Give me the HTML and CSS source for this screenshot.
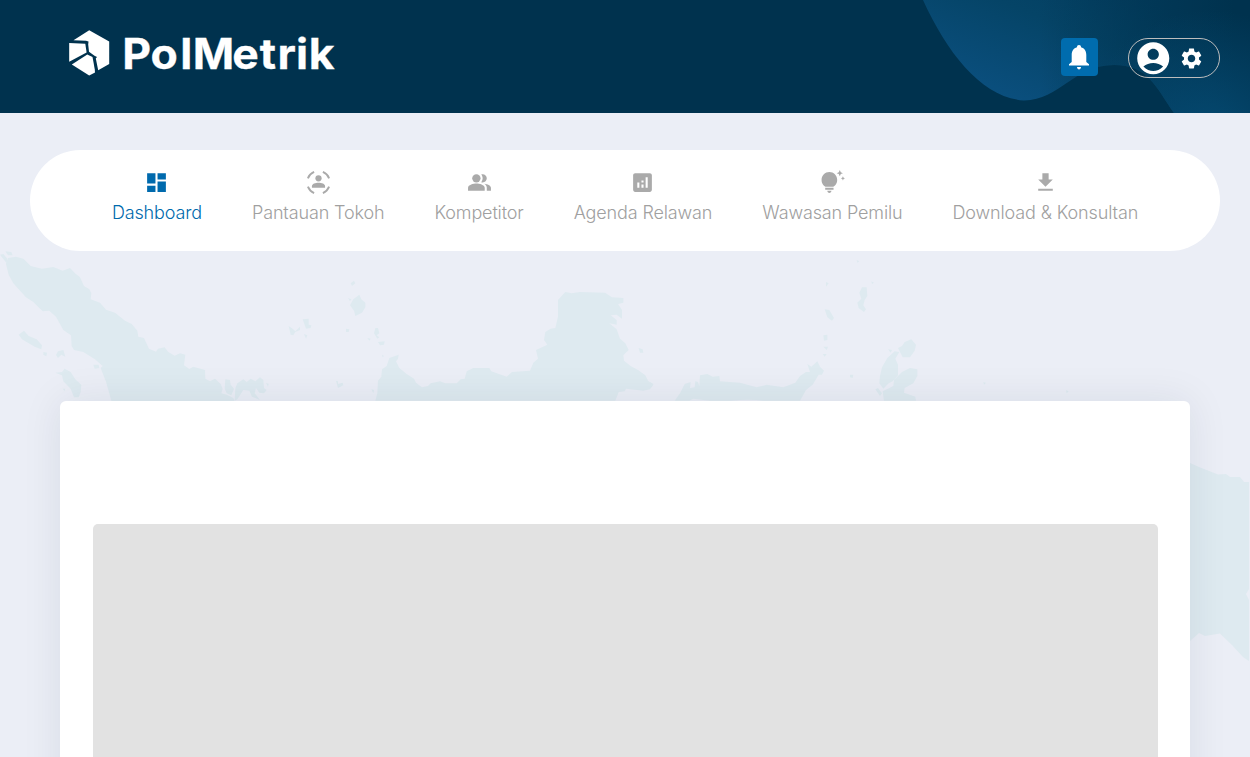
FILE: index.html
```
<!DOCTYPE html>
<html lang="id">
<head>
<meta charset="utf-8">
<title>PolMetrik</title>
<link rel="stylesheet" href="styles.css">
</head>
<body>
<div class="page">
  <svg class="map" width="1250" height="757" viewBox="0 0 1250 757" aria-hidden="true">
    <g transform="translate(0 240) scale(.33333)">
      <path d="M18 72L24 54 48 50 70 56 92 78 126 86 160 81 188 92 210 84 225 100 240 112 252 138 268 148 274 160 272 178 300 188 318 209 345 218 375 242 395 252 412 272 415 290 432 294 447 326 468 335 474 326 494 322 504 335 524 347 540 340 556 344 552 376 568 387 580 380 615 390 616 416 630 424 645 416 662 432 668 446 664 460 680 464 700 474 704 485H335L318 425 302 384 308 378 285 358 250 336 222 330 215 318 213 286 190 270 168 230 148 212 128 214 100 186 78 172 40 130 26 104Z"/>
      <path d="M16 34L34 36 38 46 24 46ZM0 44L10 42 22 56 20 70ZM56 284L72 272 86 288 110 298 126 316 124 328 104 320 66 298ZM130 336L141 338 139 349 130 344ZM168 345L174 334 190 330 196 350 184 344 174 354ZM166 398L186 396 194 386 212 396 226 418 244 434 242 456 236 472 222 472 212 446 190 424 186 406ZM188 446L196 446 194 454ZM280 374L296 374 298 384 284 386ZM676 418L690 420 692 434 702 446 694 466 680 460 674 446ZM706 445L712 430 730 418 740 426 752 416 766 424 780 412 790 420 792 444 800 450 792 460 778 458 768 444 764 460 780 480 756 470 748 452 730 450 712 478 704 482ZM798 428L806 432 804 440Z"/>
    </g>
    <g transform="translate(270 270) scale(.33333)">
      <path d="M316 392L322 370 324 332 334 320 336 298 350 288 358 264 386 254 384 266 378 274 388 294 410 312 432 326 438 338 456 352 474 348 482 340 510 334 526 340 560 340 572 328 584 326 590 304 610 294 658 294 664 304 710 320 726 306 780 302 790 278 804 266 798 240 832 224 822 210 826 186 842 176 856 174 864 140 864 90 886 66 905 70 930 66 1005 68 1026 82 1060 84 1060 98 1044 102 1056 120 1056 146 1040 134 1022 136 1040 150 1040 164 1018 160 1040 178 1050 206 1066 220 1076 240 1060 256 1062 272 1082 288 1104 300 1126 316 1134 332 1150 344 1140 358 1120 362 1068 356 1064 364 1046 366 1036 392Z"/>
      <path d="M242 40L252 32 256 40 246 48ZM234 84L244 88 240 94ZM240 106L250 88 268 74 274 88 286 98 286 112 276 128 256 138 252 122ZM56 168L68 176 76 184 90 170 90 180 76 186 70 196 62 194ZM98 148L116 146 116 164 124 166 122 174 108 176ZM102 192L112 196 108 206ZM228 176L238 178 236 186 228 186ZM316 174L324 174 328 190 320 196 328 202 322 206 312 190ZM292 204L302 206 298 212ZM324 216L344 214 342 224 330 226ZM336 254L342 258 338 262ZM198 332L204 334 204 342 218 338 220 346 204 354ZM304 358L312 360 310 370ZM1106 234L1118 238 1120 248 1110 248Z"/>
    </g>
    <g transform="translate(650 250) scale(.33333)">
      <path d="M74 452L90 430 104 402 122 396 120 414 134 412 136 394 144 396 148 408 150 376 172 372 188 380 208 378 210 394 270 398 320 412 350 404 400 412 436 398 450 378 468 366 480 366 472 342 484 350 502 334 510 350 522 362 516 374 506 374 488 404 468 420 450 452H340Q300 446 242 452L180 452 130 446 118 452Z"/>
      <path d="M690 378L696 352 712 324 734 304 748 306 736 326 744 344 744 376 728 394 716 400 700 416 688 400ZM744 294L756 288 764 276 784 268 798 284 794 302 780 322 758 322ZM714 298L726 300 722 308ZM732 390L756 366 780 354 802 358 802 378 790 400 764 414 762 428 796 440 798 452H702L698 424 730 408ZM676 418L684 414 696 430 690 438ZM636 112L650 112 652 138 644 150 640 166 648 178 642 186 626 174 622 158 634 146 628 128ZM664 94L672 98 666 102ZM620 30L628 34 622 38ZM528 96L536 100 528 110ZM524 178L538 180 552 204 546 212 532 202ZM520 256L532 254 532 270 522 272ZM520 290L534 290 530 300ZM518 312L530 312 524 320ZM600 374L610 374 608 384 600 382ZM1000 396L1008 398 1002 404ZM1248 420L1256 424 1250 430ZM0 396L10 402 2 414Z"/>
    </g>
    <path d="M1180 461L1190 463 1199 467 1218 474.500 1226 474 1230 477 1240 477 1244 482H1249V589L1246 594 1249 600V661L1243 657 1232 645 1220 633.500 1205 636 1199 633 1190 641 1180 642Z"/>
  </svg>

  <header class="topbar">
    <svg class="wave" width="340" height="113" viewBox="0 0 340 113" aria-hidden="true">
      <defs>
        <linearGradient id="waveA" gradientUnits="userSpaceOnUse" x1="100" y1="110" x2="155" y2="-30">
          <stop offset="0" stop-color="#0b5080"/><stop offset=".65" stop-color="#054467"/><stop offset="1" stop-color="#033f62"/>
        </linearGradient>
        <linearGradient id="waveB" gradientUnits="userSpaceOnUse" x1="130" y1="0" x2="325" y2="0">
          <stop offset="0" stop-color="#00324e" stop-opacity="0"/><stop offset="1" stop-color="#00324e"/>
        </linearGradient>
        <radialGradient id="waveC" gradientUnits="userSpaceOnUse" cx="300" cy="140" r="130">
          <stop offset="0" stop-color="#054a72"/><stop offset="1" stop-color="#054a72" stop-opacity="0"/>
        </radialGradient>
      </defs>
      <path fill="url(#waveA)" d="M13 0C38 55 73 98 114 100.500C150 100 164 65 204 65C238 65 246 87 264 113H340V0Z"/>
      <path fill="url(#waveB)" d="M13 0C38 55 73 98 114 100.500C150 100 164 65 204 65C238 65 246 87 264 113H340V0Z"/>
      <path fill="url(#waveC)" d="M13 0C38 55 73 98 114 100.500C150 100 164 65 204 65C238 65 246 87 264 113H340V0Z"/>
    </svg>
    <svg class="logo" width="276" height="56" viewBox="64 25 276 56" role="img" aria-label="PolMetrik">
      <path fill="#fff" d="M89.200 30.200L109.200 41.500V64L98.200 70.300 95.800 58.500 97 57 94.500 55.800 89 51.800 88.200 44.500 88.500 41.500 86 40.700 73.500 40.200Z"/>
      <path fill="#fff" d="M69.200 43L85.300 43.800 86.600 52.500 69.200 61.800Z"/>
      <path fill="#fff" d="M71.800 64.500L87.300 54.600 92.500 57 94.800 69.500 95 72.500 89.200 75.600Z"/>
      <text class="wordmark" transform="scale(1.06 1)" y="68.800" x="115.400 142.100 170 181.800 219.200 245 261.800 279.300 291.200">PolMetrik</text>
    </svg>
    <div class="actions">
      <button class="bell" aria-label="Notifikasi">
        <svg width="20" height="25" viewBox="0 0 20 25"><path fill="#fff" d="M10 0C11.300 0 12 .8 12 2.200C15.500 3 17.300 6 17.300 10V17L20 19.200V20.500H0V19.200L2.700 17V10C2.700 6 4.500 3 8 2.200C8 .8 8.700 0 10 0ZM8 22H12C12 25.200 8 25.200 8 22Z"/></svg>
      </button>
      <button class="account" aria-label="Akun">
        <svg width="38.500" height="38.500" viewBox="0 0 24 24"><path d="M12 2C6.480 2 2 6.480 2 12s4.480 10 10 10 10-4.480 10-10S17.520 2 12 2zm0 4c1.930 0 3.500 1.570 3.500 3.500S13.930 13 12 13s-3.500-1.570-3.500-3.500S10.070 6 12 6zm0 14c-2.030 0-4.430-.82-6.140-2.880C7.550 15.800 9.680 15 12 15s4.450.8 6.140 2.120C16.430 19.180 14.030 20 12 20z"/></svg>
        <svg width="25" height="25" viewBox="0 0 24 24"><path d="M19.140 12.940c.04-.3.060-.61.060-.94 0-.32-.02-.64-.07-.94l2.030-1.580c.18-.14.230-.41.120-.61l-1.920-3.320c-.12-.22-.37-.29-.59-.22l-2.390.96c-.5-.38-1.030-.7-1.620-.94l-.36-2.540c-.04-.24-.24-.41-.48-.41h-3.840c-.24 0-.43.170-.47.410l-.36 2.540c-.59.240-1.130.570-1.620.94l-2.390-.96c-.22-.08-.47 0-.59.220L2.740 8.870c-.12.210-.08.470.12.610l2.030 1.580c-.05.3-.09.630-.09.94s.02.640.07.94l-2.030 1.580c-.18.140-.23.410-.12.610l1.920 3.320c.12.220.37.290.59.220l2.390-.96c.5.380 1.030.7 1.620.94l.36 2.540c.05.240.24.410.48.410h3.840c.24 0 .44-.17.470-.41l.36-2.540c.59-.24 1.130-.56 1.620-.94l2.390.96c.22.080.47 0 .59-.22l1.920-3.320c.12-.22.070-.47-.12-.61l-2.010-1.580zM12 15.600c-1.980 0-3.600-1.620-3.600-3.600s1.620-3.600 3.600-3.600 3.600 1.620 3.600 3.600-1.620 3.600-3.600 3.600z"/></svg>
      </button>
    </div>
  </header>

  <nav class="menu">
    <a class="item active"><svg viewBox="0 0 24 24"><path d="M3 13h8V3H3v10zm0 8h8v-6H3v6zm10 0h8V11h-8v10zm0-18v6h8V3h-8z"/></svg><span>Dashboard</span></a>
    <a class="item"><svg viewBox="0 0 24 24"><circle cx="12" cy="8" r="3"/><path d="M5.700 17v-1.500C5.700 13.200 9 12.200 12 12.200s6.300 1 6.300 3.300V17z"/><path fill="none" stroke="currentColor" stroke-width="1.800" d="M1.800 8A11 11 0 0 1 7.800 1.900M16.200 1.900A11 11 0 0 1 22.200 8M22.200 16A11 11 0 0 1 16.200 22.100M7.800 22.100A11 11 0 0 1 1.800 16"/></svg><span>Pantauan Tokoh</span></a>
    <a class="item"><svg viewBox="0 0 24 24"><path d="M16.670 13.130C18.040 14.060 19 15.320 19 17v3h4v-3c0-2.180-3.570-3.470-6.330-3.870z"/><circle cx="9" cy="8" r="4"/><path d="M15 12c2.210 0 4-1.790 4-4s-1.790-4-4-4c-.47 0-.91.1-1.330.24C14.500 5.270 15 6.580 15 8s-.5 2.730-1.330 3.760c.42.140.86.240 1.330.24zM9 13c-2.670 0-8 1.340-8 4v3h16v-3c0-2.660-5.330-4-8-4z"/></svg><span>Kompetitor</span></a>
    <a class="item"><svg viewBox="0 0 24 24"><path fill-rule="evenodd" d="M19 3H5c-1.100 0-2 .9-2 2v14c0 1.100.9 2 2 2h14c1.100 0 2-.9 2-2V5c0-1.100-.9-2-2-2zM9 17H7v-5h2v5zm4 0h-2v-3h2v3zm0-5h-2v-2h2v2zm4 5h-2V7h2v10z"/></svg><span>Agenda Relawan</span></a>
    <a class="item"><svg viewBox="0 0 24 24"><path d="M7 20h4c0 1.100-.9 2-2 2s-2-.9-2-2zm-2-1h8v-2H5v2zm11.500-9.500c0 3.820-2.660 5.860-3.770 6.500H5.270C4.160 15.360 1.500 13.320 1.500 9.500 1.500 5.360 4.860 2 9 2s7.500 3.360 7.500 7.500zm4.870-2.130L20 8l1.370.63L22 10l.63-1.370L24 8l-1.370-.63L22 6l-.63 1.370zM19 6l.94-2.060L22 3l-2.060-.94L19 0l-.94 2.060L16 3l2.060.94L19 6z"/></svg><span>Wawasan Pemilu</span></a>
    <a class="item"><svg viewBox="0 0 24 24"><path d="M19 9h-4V3H9v6H5l7 7 7-7zM5 18v2h14v-2H5z"/></svg><span>Download &amp; Konsultan</span></a>
  </nav>

  <main class="card">
    <div class="placeholder"></div>
  </main>
</div>
</body>
</html>
```
FILE: styles.css
```
* { box-sizing: border-box; }
body {
  margin: 0;
  height: 757px;
  overflow: hidden;
  background: #ebeef6;
  font-family: Inter, "Liberation Sans", sans-serif;
}
.page { position: relative; height: 757px; overflow: hidden; }
.map { position: absolute; inset: 0; fill: #deeaf0; }
.topbar {
  position: relative;
  height: 113px;
  padding: 25px 30px 0 64px;
  background: #00324e;
  display: flex;
  justify-content: space-between;
  align-items: flex-start;
}
.wave { position: absolute; top: 0; right: 0; }
.logo { display: block; }
.wordmark { fill: #fff; stroke: #fff; stroke-width: .3px; font: 700 42px Inter, sans-serif; }
.actions { position: relative; display: flex; gap: 30px; margin-top: 13px; }
.bell, .account { border: 0; padding: 0; display: flex; align-items: center; }
.bell { width: 37px; height: 38px; padding-right: 2px; border-radius: 4px; background: #006cae; justify-content: center; }
.account {
  width: 92px;
  height: 40px;
  padding-left: 5px;
  gap: 6px;
  border: 1px solid #bdbdbd;
  border-radius: 20px;
  background: none;
  fill: #fff;
}
.menu {
  position: relative;
  display: flex;
  justify-content: center;
  gap: 50px;
  height: 101px;
  margin: 37px 30px 0;
  padding-top: 20px;
  border-radius: 51px;
  background: #fff;
}
.item {
  display: flex;
  flex-direction: column;
  align-items: center;
  gap: 6px;
  color: #a0a0a0;
  font-size: 18px;
  line-height: 24px;
  font-weight: 350;
  letter-spacing: -.135px;
  white-space: nowrap;
}
.item svg { width: 25px; height: 25px; fill: #aaa; color: #aaa; }
.item.active { color: #006aad; }
.item.active svg { fill: #006aad; }
.card {
  position: relative;
  height: 500px;
  margin: 150px 60px 0;
  padding: 123px 32px 0 33px;
  border-radius: 6px;
  background: #fff;
  box-shadow: 0 0 40px rgba(0, 30, 60, .085);
}
.placeholder { height: 377px; border-radius: 5px; background: #e2e2e2; }
```
